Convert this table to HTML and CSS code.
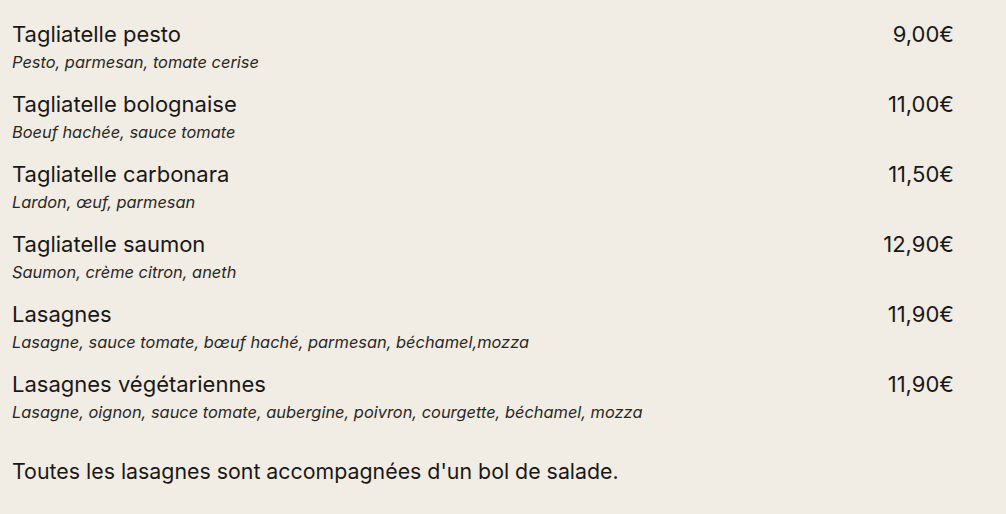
FILE: index.html
```html
<!DOCTYPE html>
<html lang="fr">
<head>
<meta charset="utf-8">
<link rel="stylesheet" href="styles.css">
</head>
<body>
<main class="menu">
  <div class="item">
    <div class="item-head"><span class="item-name">Tagliatelle pesto</span><span class="item-price">9,00€</span></div>
    <div class="item-desc">Pesto, parmesan, tomate cerise</div>
  </div>
  <div class="item">
    <div class="item-head"><span class="item-name">Tagliatelle bolognaise</span><span class="item-price">11,00€</span></div>
    <div class="item-desc">Boeuf hachée, sauce tomate</div>
  </div>
  <div class="item">
    <div class="item-head"><span class="item-name">Tagliatelle carbonara</span><span class="item-price">11,50€</span></div>
    <div class="item-desc">Lardon, œuf, parmesan</div>
  </div>
  <div class="item">
    <div class="item-head"><span class="item-name">Tagliatelle saumon</span><span class="item-price">12,90€</span></div>
    <div class="item-desc">Saumon, crème citron, aneth</div>
  </div>
  <div class="item">
    <div class="item-head"><span class="item-name">Lasagnes</span><span class="item-price">11,90€</span></div>
    <div class="item-desc">Lasagne, sauce tomate, bœuf haché, parmesan, béchamel,mozza</div>
  </div>
  <div class="item">
    <div class="item-head"><span class="item-name">Lasagnes végétariennes</span><span class="item-price">11,90€</span></div>
    <div class="item-desc">Lasagne, oignon, sauce tomate, aubergine, poivron, courgette, béchamel, mozza</div>
  </div>
  <p class="note">Toutes les lasagnes sont accompagnées d'un bol de salade.</p>
</main>
</body>
</html>
```

FILE: styles.css
```css
html, body {
  margin: 0;
  padding: 0;
  background: #f1ede4;
}
body {
  font-family: Inter, "Liberation Sans", sans-serif;
  color: #1a1816;
}
.menu {
  padding: 20px 52px 0 12px;
}
.item {
  display: flex;
  flex-direction: column;
  height: 70px;
}
.item-head {
  display: flex;
  justify-content: space-between;
  align-items: baseline;
  font-size: 22px;
  font-weight: 400;
  line-height: 28px;
}
.item-desc {
  padding-top: 3px;
  font-style: italic;
  font-size: 16.4px;
  font-weight: 400;
  line-height: 22px;
  color: #2a2825;
}
.note {
  margin: 17px 0 0;
  font-size: 21.35px;
  font-weight: 400;
  line-height: 28px;
}
```
